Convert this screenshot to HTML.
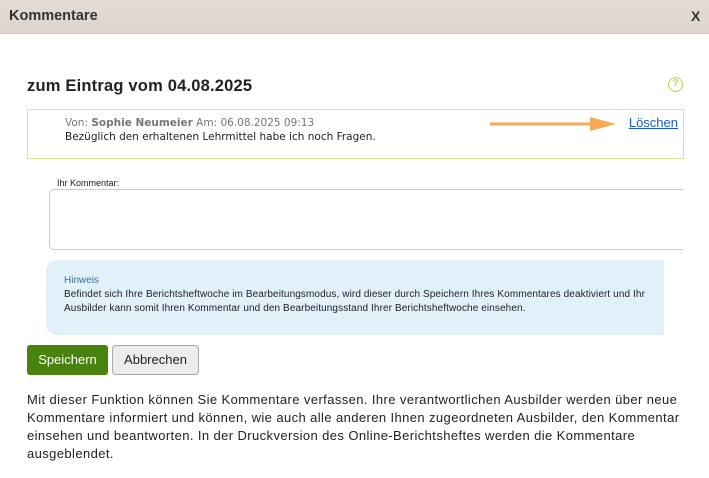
<!DOCTYPE html>
<html><head><meta charset="utf-8"><style>
*{margin:0;padding:0;box-sizing:border-box}
body{width:709px;height:478px;background:#fff;font-family:"DejaVu Sans","Liberation Sans",sans-serif;position:relative;overflow:hidden;color:#222}
.hd{position:absolute;left:0;top:0;width:709px;height:34px;background:linear-gradient(#e6ddd7,#ddd3cc);border-bottom:1px solid #ccc}
.hd b{position:absolute;left:9px;top:8px;font:bold 14.5px "Liberation Sans",sans-serif;color:#333}
.hd i{position:absolute;left:691px;top:8px;font:bold 14px "Liberation Sans",sans-serif;font-style:normal;color:#333}
h1{position:absolute;left:27px;top:77px;font:bold 16.5px "Liberation Sans",sans-serif;color:#222;letter-spacing:.2px}
.q{position:absolute;left:668px;top:77px;width:15px;height:15px;border:1.5px solid #b8d640;border-radius:50%;color:#b8d640;font:bold 10px "Liberation Sans",sans-serif;text-align:center;line-height:12px}
.box{position:absolute;left:27px;top:109px;width:657px;height:50px;border:1px solid #dbe89a}
.m1{position:absolute;left:37px;top:7px;font-size:10.5px;color:#777;white-space:nowrap}
.m2{position:absolute;left:37px;top:21px;font-size:10.5px;color:#222;white-space:nowrap}
.del{position:absolute;right:5px;top:5px;font:13px "Liberation Sans",sans-serif;color:#1a5cd6;text-decoration:underline}
.lab{position:absolute;left:57px;top:178px;font:9px "Liberation Sans",sans-serif;color:#222}
.ta{position:absolute;left:49px;top:189px;width:634px;height:61px;border:1px solid #ccc;border-right:none;border-radius:5px 0 0 5px}
.hw{position:absolute;left:46px;top:260px;width:618px;height:75px;background:#e2f0fa;border-radius:11px 0 0 11px}
.hw .t{position:absolute;left:18px;top:15px;font:10px "Liberation Sans",sans-serif;color:#3a6f9a}
.hw .p{position:absolute;left:18px;top:28px;width:610px;font:10px/14px "Liberation Sans",sans-serif;color:#222;letter-spacing:.1px;white-space:nowrap}
.b1{position:absolute;left:27px;top:345px;width:81px;height:30px;background:#4a8210;border-radius:3px;color:#fff;font:13px/30px "Liberation Sans",sans-serif;text-align:center}
.b2{position:absolute;left:112px;top:345px;width:87px;height:30px;background:#ececec;border:1px solid #aaa;border-radius:4px;color:#222;font:13px/28px "Liberation Sans",sans-serif;text-align:center}
.txt{position:absolute;left:27px;top:391px;width:680px;font:13px/18px "Liberation Sans",sans-serif;color:#222;letter-spacing:.4px}
</style></head><body>
<div class="hd"><b>Kommentare</b><i>X</i></div>
<h1>zum Eintrag vom 04.08.2025</h1>
<div class="q">?</div>
<div class="box">
<div class="m1">Von: <b>Sophie Neumeier</b> Am: 06.08.2025 09:13</div>
<div class="m2">Bezüglich den erhaltenen Lehrmittel habe ich noch Fragen.</div>
<svg style="position:absolute;left:462px;top:6px" width="130" height="16"><line x1="0" y1="8" x2="110" y2="8" stroke="#f7a955" stroke-width="3"/><polygon points="100,1 126,8 100,15" fill="#f7a955"/></svg>
<div class="del">Löschen</div>
</div>
<div class="lab">Ihr Kommentar:</div>
<div class="ta"></div>
<div class="hw"><div class="t">Hinweis</div><div class="p">Befindet sich Ihre Berichtsheftwoche im Bearbeitungsmodus, wird dieser durch Speichern Ihres Kommentares deaktiviert und Ihr<br>Ausbilder kann somit Ihren Kommentar und den Bearbeitungsstand Ihrer Berichtsheftwoche einsehen.</div></div>
<div class="b1">Speichern</div>
<div class="b2">Abbrechen</div>
<div class="txt">Mit dieser Funktion können Sie Kommentare verfassen. Ihre verantwortlichen Ausbilder werden über neue<br>Kommentare informiert und können, wie auch alle anderen Ihnen zugeordneten Ausbilder, den Kommentar<br>einsehen und beantworten. In der Druckversion des Online-Berichtsheftes werden die Kommentare<br>ausgeblendet.</div>
</body></html>
